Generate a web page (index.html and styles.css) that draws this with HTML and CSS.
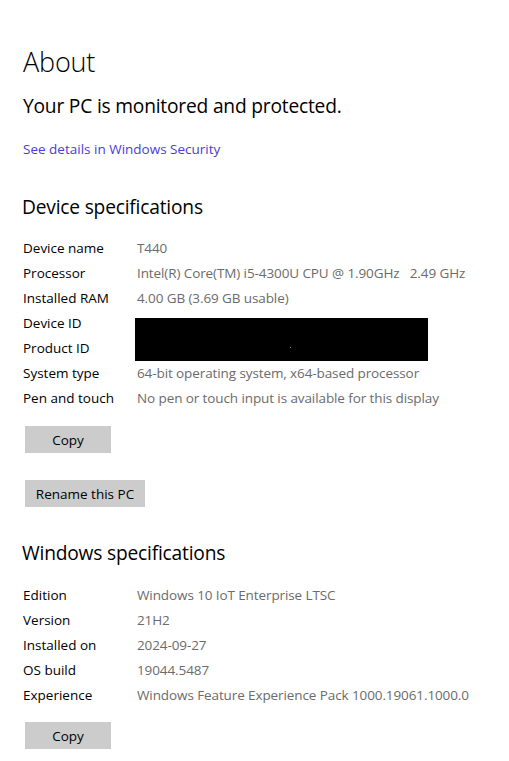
FILE: index.html
```html
<!DOCTYPE html>
<html>
<head>
<meta charset="utf-8">
<link rel="stylesheet" href="styles.css">
</head>
<body>
<main class="page">
  <h1 class="title">About</h1>
  <p class="status">Your PC is monitored and protected.</p>
  <a class="link" href="#">See details in Windows Security</a>

  <h2 class="section">Device specifications</h2>
  <div class="specs">
    <div class="label">Device name</div><div class="value">T440</div>
    <div class="label">Processor</div><div class="value">Intel(R) Core(TM) i5-4300U CPU @ 1.90GHz   2.49 GHz</div>
    <div class="label">Installed RAM</div><div class="value">4.00 GB (3.69 GB usable)</div>
    <div class="label">Device ID</div><div class="redact"><span class="speck"></span></div>
    <div class="label">Product ID</div>
    <div class="label">System type</div><div class="value">64-bit operating system, x64-based processor</div>
    <div class="label">Pen and touch</div><div class="value">No pen or touch input is available for this display</div>
  </div>
  <button class="btn btn-copy">Copy</button>
  <button class="btn btn-rename">Rename this PC</button>

  <h2 class="section section-win">Windows specifications</h2>
  <div class="specs specs-win">
    <div class="label">Edition</div><div class="value">Windows 10 IoT Enterprise LTSC</div>
    <div class="label">Version</div><div class="value">21H2</div>
    <div class="label">Installed on</div><div class="value">2024-09-27</div>
    <div class="label">OS build</div><div class="value">19044.5487</div>
    <div class="label">Experience</div><div class="value">Windows Feature Experience Pack 1000.19061.1000.0</div>
  </div>
  <button class="btn btn-copy btn-last">Copy</button>
</main>
</body>
</html>
```
FILE: styles.css
```css
* { box-sizing: border-box; }
html, body {
  margin: 0;
  padding: 0;
  background: #ffffff;
}
body {
  font-family: "Open Sans", "Noto Sans", "Liberation Sans", sans-serif;
  color: #000;
}
.page {
  display: flex;
  flex-direction: column;
  align-items: flex-start;
  padding: 42px 0 0 23px;
}
.title {
  margin: 0;
  font-size: 27px;
  font-weight: 300;
  line-height: 40px;
  height: 40px;
  letter-spacing: -0.2px;
}
.status {
  margin: 10px 0 0 0;
  font-size: 19.2px;
  font-weight: 400;
  line-height: 28px;
  letter-spacing: -0.2px;
}
.link {
  margin-top: 19px;
  font-size: 13.5px;
  line-height: 20px;
  color: #4a3cd8;
  text-decoration: none;
}
.section {
  margin: 34px 0 0 -1px;
  font-size: 19.2px;
  font-weight: 400;
  line-height: 28px;
  letter-spacing: -0.2px;
}
.specs {
  margin-top: 15px;
  display: grid;
  grid-template-columns: 114px auto;
  grid-auto-rows: 25px;
  font-size: 13.5px;
  line-height: 25px;
}
.specs-win { margin-top: 16px; }
.label { color: #000; grid-column: 1; }
.value {
  grid-column: 2;
  color: #6b6b6b;
  white-space: pre;
  letter-spacing: -0.1px;
}
.redact {
  grid-column: 2;
  grid-row: span 2;
  margin: 7px 0 0 -2px;
  width: 293px;
  height: 43px;
  background: #000;
  position: relative;
}
.speck {
  position: absolute;
  left: 155px;
  top: 29px;
  width: 1px;
  height: 1px;
  background: #777;
}
.btn {
  margin-left: 2px;
  border: none;
  background: #cccccc;
  font-family: inherit;
  font-size: 13.5px;
  color: #000;
  height: 27px;
  padding: 0;
}
.btn-copy { width: 86px; margin-top: 15px; }
.btn-rename { width: 120px; margin-top: 27px; }
.section-win { margin-top: 32px; }
.btn-last { margin-top: 14px; }
```
